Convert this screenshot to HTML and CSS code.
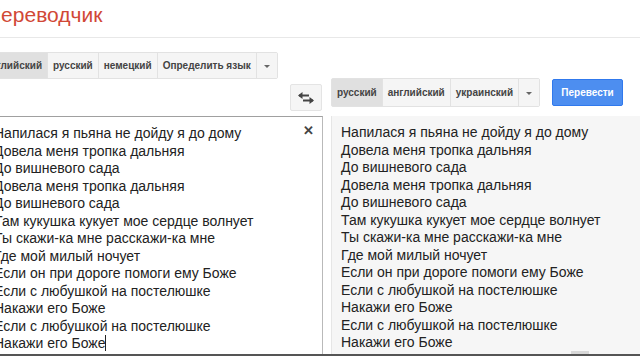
FILE: index.html
```html
<!DOCTYPE html>
<html lang="ru">
    <head>
        <meta charset="UTF-8">
        <meta name="viewport" content="width=device-width, initial-scale=1.0">
        <title>Переводчик</title>
        <link rel="stylesheet" href="styles.css">
    </head>
    <body>
        <div class="page">
            <div class="title">Переводчик</div>

            <div class="main">
                <div class="controls-left">
                    <div class="lang-bar">
                        <button class="lang selected">английский</button>
                        <button class="lang">русский</button>
                        <button class="lang">немецкий</button>
                        <button class="lang">Определить язык</button>
                        <button class="lang drop"><span class="caret"></span></button>
                    </div>
                    <div class="swap-row">
                        <button class="swap">
                            <svg width="16" height="12" viewBox="0 0 16 12">
                                <path d="M1 3.5h10" stroke="#444" stroke-width="2"/>
                                <path d="M0 3.5L4.5 0v7z" fill="#444"/>
                                <path d="M5 8.5h10" stroke="#444" stroke-width="2"/>
                                <path d="M16 8.5L11.5 5v7z" fill="#444"/>
                            </svg>
                        </button>
                    </div>
                </div>

                <div class="controls-right">
                    <div class="lang-bar">
                        <button class="lang selected">русский</button>
                        <button class="lang">английский</button>
                        <button class="lang">украинский</button>
                        <button class="lang drop"><span class="caret"></span></button>
                    </div>
                    <button class="btn-translate">Перевести</button>
                </div>

                <div class="source">
                    <span class="clear">&#x2715;</span>
                    <div class="lines">
                        <div>Напилася я пьяна не дойду я до дому</div>
                        <div>Довела меня тропка дальняя</div>
                        <div>До вишневого сада</div>
                        <div>Довела меня тропка дальняя</div>
                        <div>До вишневого сада</div>
                        <div>Там кукушка кукует мое сердце волнует</div>
                        <div>Ты скажи-ка мне расскажи-ка мне</div>
                        <div>Где мой милый ночует</div>
                        <div>Если он при дороге помоги ему Боже</div>
                        <div>Если с любушкой на постелюшке</div>
                        <div>Накажи его Боже</div>
                        <div>Если с любушкой на постелюшке</div>
                        <div>Накажи его Боже<span class="cursor"></span></div>
                    </div>
                </div>

                <div class="result">
                    <div class="lines">
                        <div>Напилася я пьяна не дойду я до дому</div>
                        <div>Довела меня тропка дальняя</div>
                        <div>До вишневого сада</div>
                        <div>Довела меня тропка дальняя</div>
                        <div>До вишневого сада</div>
                        <div>Там кукушка кукует мое сердце волнует</div>
                        <div>Ты скажи-ка мне расскажи-ка мне</div>
                        <div>Где мой милый ночует</div>
                        <div>Если он при дороге помоги ему Боже</div>
                        <div>Если с любушкой на постелюшке</div>
                        <div>Накажи его Боже</div>
                        <div>Если с любушкой на постелюшке</div>
                        <div>Накажи его Боже</div>
                    </div>
                    <span class="grip"></span>
                </div>
            </div>
        </div>
    </body>
</html>
```

FILE: styles.css
```css
* {
    margin: 0;
    padding: 0;
    box-sizing: border-box;
    font-family: "Liberation Sans", Arial, sans-serif;
}

html, body {
    width: 640px;
    height: 360px;
    overflow: hidden;
    background-color: white;
}

.page {
    margin-left: -60px;
    width: 700px;
}

.title {
    color: #d14836;
    font-size: 21px;
    padding-left: 46px;
    padding-top: 3px;
    height: 38px;
    border-bottom: 1px solid #e8e8e8;
}

.main {
    display: grid;
    grid-template-columns: 383px 309px;
    column-gap: 8px;
    padding-top: 14px;
}

.controls-left {
    display: flex;
    flex-direction: column;
}

.controls-left .lang-bar {
    margin-left: 39px;
}

.controls-right {
    display: flex;
    align-items: flex-start;
    align-self: end;
    margin-bottom: 9px;
}

.lang-bar {
    display: flex;
    border: 1px solid #e2e2e2;
    border-radius: 2px;
    background-color: #f5f5f5;
    align-self: flex-start;
}

.lang {
    border: none;
    border-right: 1px solid #e2e2e2;
    background-color: #f5f5f5;
    color: #444;
    font-weight: bold;
    font-size: 10px;
    height: 25px;
    padding: 0 5px;
    cursor: pointer;
}

.controls-right .lang {
    height: 27px;
}

.lang.selected {
    background-color: #e0e0e0;
}

.lang.drop {
    border-right: none;
    width: 20px;
}

.caret {
    display: inline-block;
    border-left: 3px solid transparent;
    border-right: 3px solid transparent;
    border-top: 3px solid #666;
    vertical-align: middle;
}

.swap-row {
    display: flex;
    justify-content: flex-end;
    padding-top: 5px;
    padding-bottom: 5px;
}

.swap {
    width: 32px;
    height: 27px;
    border: 1px solid #e4e4e4;
    border-radius: 2px;
    background-color: #f5f5f5;
    display: flex;
    align-items: center;
    justify-content: center;
    margin-right: 1px;
}

.btn-translate {
    margin-left: 12px;
    margin-top: 1px;
    width: 71px;
    height: 27px;
    border: 1px solid #3079ed;
    border-radius: 2px;
    background-color: #4d8ef0;
    color: white;
    font-weight: bold;
    font-size: 10px;
}

.source {
    position: relative;
    height: 238px;
    border: 1px solid #b9b9b9;
    border-top-color: #a0a0a0;
    border-bottom: none;
    padding: 8px 0 0 53px;
}

.clear {
    position: absolute;
    top: 6px;
    right: 8px;
    font-size: 13px;
    color: #444;
    font-weight: bold;
}

.lines {
    font-size: 14px;
    line-height: 17.5px;
    color: #222;
}

.cursor {
    display: inline-block;
    width: 1px;
    height: 16px;
    background-color: #222;
    vertical-align: -3px;
}

.result {
    position: relative;
    height: 238px;
    background-color: #f6f6f6;
    border-left: 1px solid #e6e6e6;
    padding: 8px 0 0 9px;
}

.main::after {
    content: "";
    grid-column: 1 / 3;
    height: 2px;
    background-color: #555;
}

.grip {
    position: absolute;
    left: 239px;
    bottom: 0;
    width: 18px;
    height: 3px;
    background-color: #d8d8d8;
}
```
